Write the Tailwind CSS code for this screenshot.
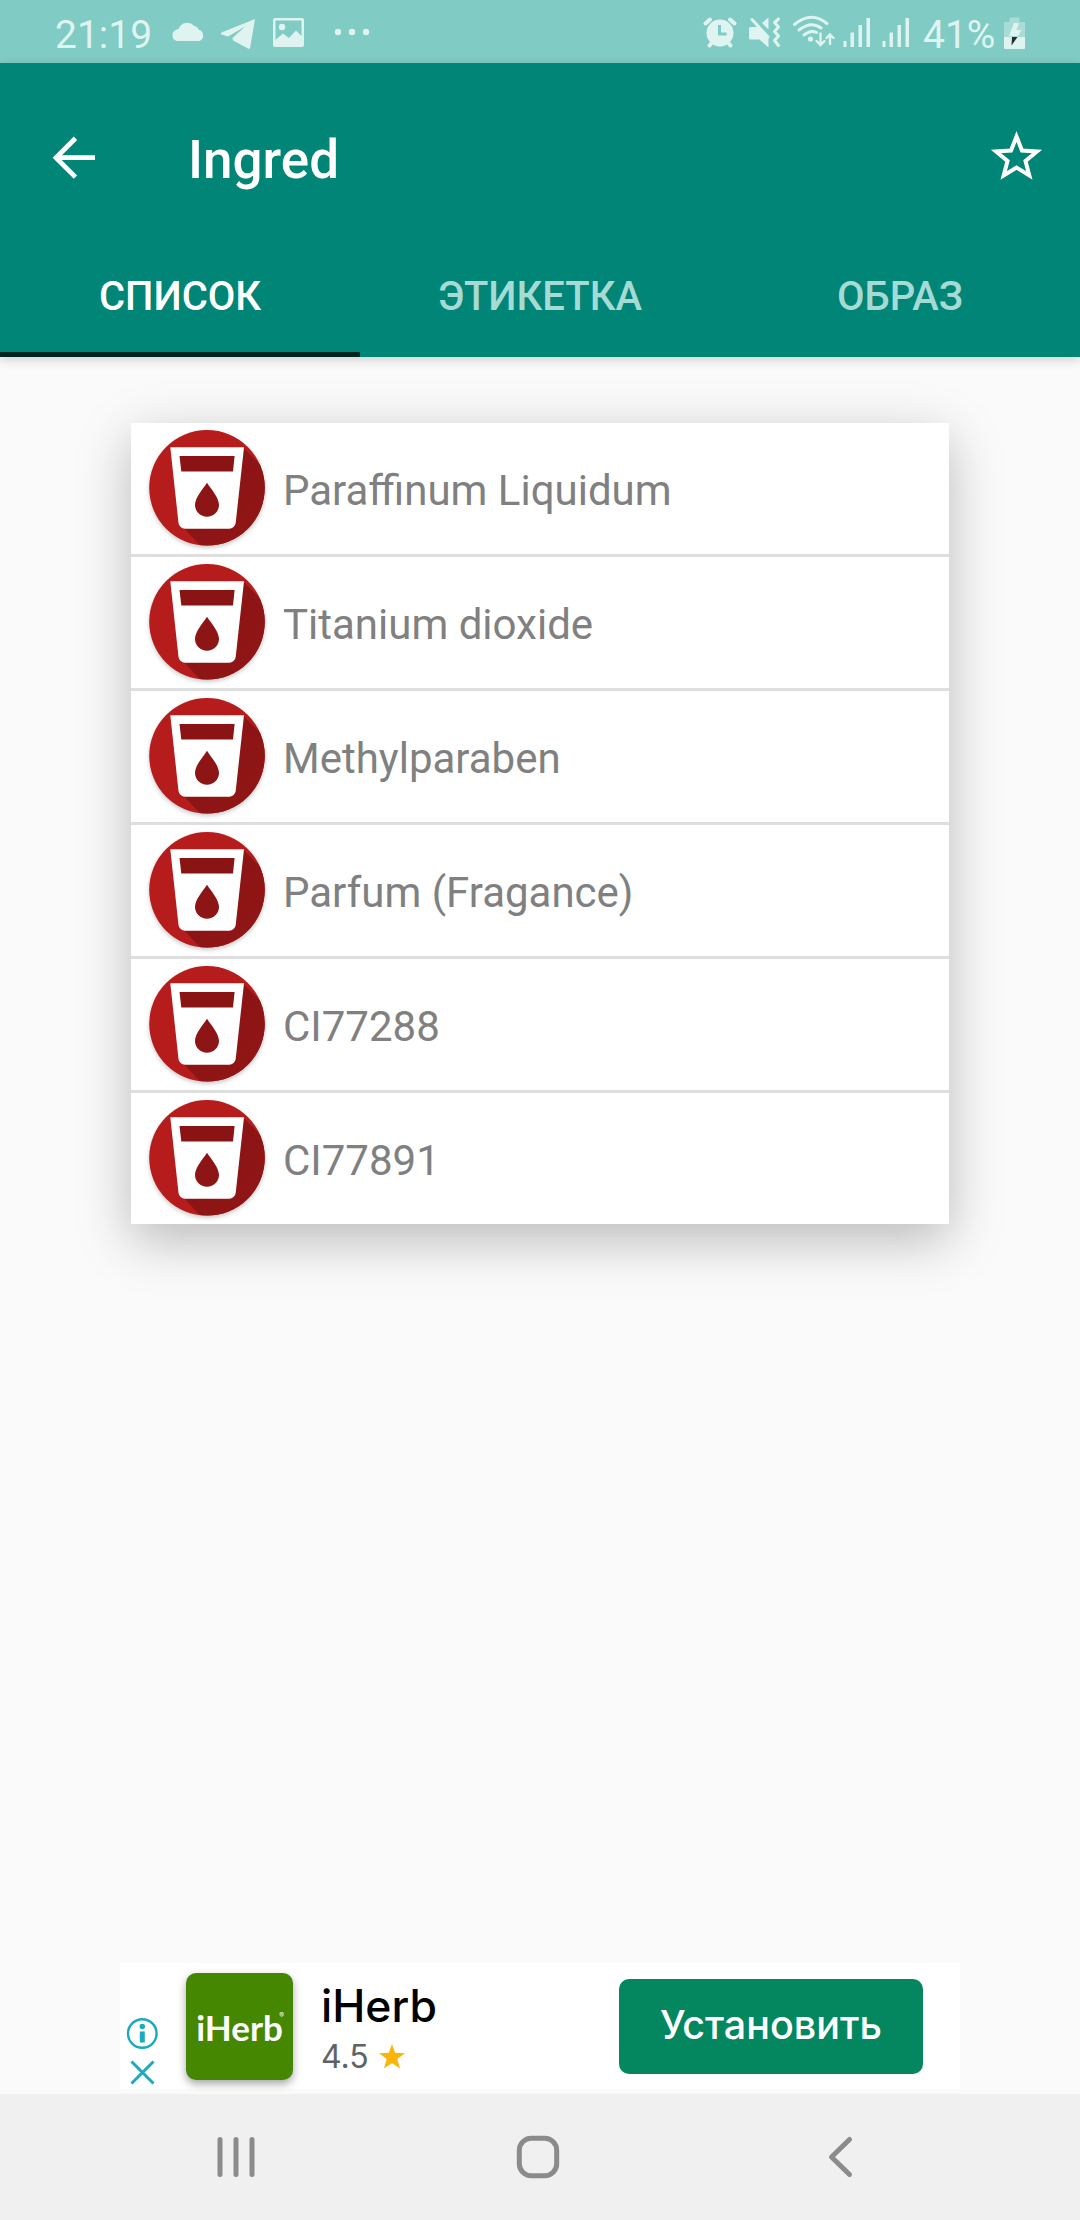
<!DOCTYPE html>
<html lang="ru">
<head>
<meta charset="utf-8">
<title>Ingred</title>
<script src="https://cdn.jsdelivr.net/npm/@tailwindcss/browser@4"></script>
</head>
<body class="w-[1080px] h-[2220px] bg-[#fafafa] font-['Roboto',sans-serif] flex flex-col overflow-hidden">

<!-- Status bar -->
<div class="h-[63px] shrink-0 bg-[#80cbc4] text-[#dff4f1] flex items-center">
  <span class="ml-[55px] pt-[7px] w-[113px] text-[39px] leading-none whitespace-nowrap">21:19</span>
  <svg class="w-[204px] h-[63px]" viewBox="168 0 204 63" fill="#dff4f1">
    <path d="M177 41a6 6 0 0 1-.5-11.500a6 6 0 0 1 2-.2a9 9 0 0 1 15.500-3.500a7 7 0 0 1 5 4a6 6 0 0 1 .5 11.200z"/>
    <path d="M255 19L221.500 32.500c-1 .5-1 1.500 0 2l6.500 2L245 26.500L232.500 38L233 40.500L248 48.500c1.500.8 2 0 2.200-1z"/>
    <path fill-rule="evenodd" d="M275 18h27a2 2 0 0 1 2 2v25a2 2 0 0 1-2 2h-27a2 2 0 0 1-2-2V20a2 2 0 0 1 2-2zM275.500 20.500V40L283 33.500L289 38L296 30.500L301.500 36V20.500z"/>
    <circle cx="282" cy="27" r="3.200"/>
    <circle cx="338" cy="32" r="3.200"/><circle cx="352" cy="32" r="3.200"/><circle cx="366" cy="32" r="3.200"/>
  </svg>
  <svg class="ml-auto w-[220px] h-[63px]" viewBox="700 0 220 63" fill="#dff4f1">
    <circle cx="720" cy="33" r="13.500"/>
    <g fill="none" stroke="#dff4f1" stroke-width="4" stroke-linecap="round"><path d="M705.500 23.500L710 19.500M734.500 23.500L730 19.500M709.500 45.500L712 42.500M730.500 45.500L728 42.500"/></g>
    <path d="M719.500 25v9h7" fill="none" stroke="#80cbc4" stroke-width="3"/>
    <path d="M750.500 27h8L768.500 36V47.500L759.500 39.500H750.500a1.500 1.500 0 0 1-1.500-1.500V28.500a1.500 1.500 0 0 1 1.500-1.500zM762 23L768.500 17.500V29.500z"/>
    <path d="M752 19.500L768 37" stroke="#dff4f1" stroke-width="3" stroke-linecap="round"/>
    <path d="M778.500 19L774.500 22.500L778.500 27L774.500 31.500L778.500 36L774.500 40.500L778.500 45.500" fill="none" stroke="#dff4f1" stroke-width="3" stroke-linecap="round" stroke-linejoin="round"/>
    <g fill="none" stroke="#dff4f1" stroke-width="3" stroke-linecap="round">
      <path d="M794.500 24.500Q811 10.500 827 23.500M799 30Q811 20.500 821 28M804 35Q811 29.500 816.500 32.500"/>
      <path d="M820.500 33.500V44.500M816.500 41L820.500 45L824.500 41M830 44V34.500M826.500 38L830 34.500L833.500 38" stroke-width="2.400"/>
    </g>
    <circle cx="810.500" cy="39" r="2.600"/>
    <path d="M843.500 41h3v6h-3zM850.500 32.500h3.500V47h-3.500zM858.500 25h3.500V47h-3.500zM866.500 18h3.500V47h-3.500zM882.500 41h3v6h-3zM889.500 32.500h3.500V47h-3.500zM897.500 25h3.500V47h-3.500zM905.500 18h3.500V47h-3.500z"/>
  </svg>
  <span class="ml-[3px] pt-[7px] w-[77px] text-[39px] leading-none whitespace-nowrap">41%</span>
  <svg class="w-[80px] h-[63px]" viewBox="1000 0 80 63">
    <path d="M1009.500 17.500h10v4.500h5.500V37h-21V22h5.500z" fill="#a9dcd7"/>
    <path d="M1004 37h21v11a1 1 0 0 1-1 1h-19a1 1 0 0 1-1-1z" fill="#dff4f1"/>
    <path d="M1014 23h5l-2.500 7h5l-3.500 6h-9z" fill="#dff4f1"/>
    <path d="M1012 37h5.500L1011.500 45.500z" fill="#26302f"/>
  </svg>
</div>

<!-- App bar with tabs -->
<div class="relative z-10 h-[294px] shrink-0 bg-[#008577] flex flex-col shadow-[0_3px_10px_rgba(0,0,0,0.16)]">
  <div class="h-[190px] flex items-center text-white">
    <svg class="ml-[50px] w-[50px] h-[50px]" viewBox="50 133 50 50" fill="none" stroke="#fff" stroke-width="4.800"><path d="M95 157.700H56.500M75.500 138.300L56 157.700L75.500 177.100"/></svg>
    <span class="ml-[88px] pt-[4px] text-[53px] leading-none font-medium">Ingred</span>
    <svg class="ml-auto mr-[36px] w-[56px] h-[56px]" viewBox="988 130 56 56" fill="none" stroke="#fff" stroke-width="4"><path d="M1016.500 136.500L1022 150.500L1037 151.500L1025.500 161L1029.300 175.500L1016.500 167.500L1003.700 175.500L1007.500 161L996 151.500L1011 150.500z"/></svg>
  </div>
  <div class="flex-1 grid grid-cols-3 text-[40px] leading-none font-medium text-[#a6dad5]">
    <div class="border-b-5 border-[#002622] flex justify-center pt-[24px] text-white"><span>СПИСОК</span></div>
    <div class="flex justify-center pt-[24px]"><span>ЭТИКЕТКА</span></div>
    <div class="flex justify-center pt-[24px]"><span>ОБРАЗ</span></div>
  </div>
</div>

<svg class="absolute w-0 h-0">
  <defs>
    <linearGradient id="dark" x1="0" y1="0" x2="1" y2="1"><stop offset="0" stop-color="#881313"/><stop offset="1" stop-color="#9a1819"/></linearGradient>
    <clipPath id="disc"><circle cx="58" cy="57.800" r="57.800"/></clipPath>
    <symbol id="cup" viewBox="-4 -4 124 128">
      <circle cx="58" cy="57.800" r="57.800" fill="#b71c1c"/>
      <path clip-path="url(#disc)" d="M94 17.500L170 93L130 200L32 95z" fill="url(#dark)"/>
      <path d="M21.300 17.300H95L86.700 93a6.500 6.500 0 0 1-6.500 5.700H36a6.500 6.500 0 0 1-6.500-5.700z" fill="#fff"/>
      <path d="M30.500 26H85.600L84 41.500H32.300z" fill="#8a1414"/>
      <path d="M58 52.700C62 59 70 67.500 70 75a12 11.700 0 0 1-24 0C46 67.500 54 59 58 52.700z" fill="#8e1515"/>
    </symbol>
  </defs>
</svg>

<!-- Ingredient list -->
<div class="mt-[66px] mx-[131px] h-[801px] shrink-0 bg-white divide-y-3 divide-[#dedede] text-[42px] leading-none text-[#808080] shadow-[0_16px_50px_rgba(0,0,0,0.26)]">
  <div class="h-[134px] flex items-center"><svg class="ml-[14px] mt-[3px] w-[124px] h-[128px] drop-shadow-[0_2px_2px_rgba(0,0,0,0.22)]"><use href="#cup"/></svg><span class="ml-[14px] pt-[5px]">Paraffinum Liquidum</span></div>
  <div class="h-[134px] flex items-center"><svg class="ml-[14px] mt-[3px] w-[124px] h-[128px] drop-shadow-[0_2px_2px_rgba(0,0,0,0.22)]"><use href="#cup"/></svg><span class="ml-[14px] pt-[5px]">Titanium dioxide</span></div>
  <div class="h-[134px] flex items-center"><svg class="ml-[14px] mt-[3px] w-[124px] h-[128px] drop-shadow-[0_2px_2px_rgba(0,0,0,0.22)]"><use href="#cup"/></svg><span class="ml-[14px] pt-[5px]">Methylparaben</span></div>
  <div class="h-[134px] flex items-center"><svg class="ml-[14px] mt-[3px] w-[124px] h-[128px] drop-shadow-[0_2px_2px_rgba(0,0,0,0.22)]"><use href="#cup"/></svg><span class="ml-[14px] pt-[5px]">Parfum (Fragance)</span></div>
  <div class="h-[134px] flex items-center"><svg class="ml-[14px] mt-[3px] w-[124px] h-[128px] drop-shadow-[0_2px_2px_rgba(0,0,0,0.22)]"><use href="#cup"/></svg><span class="ml-[14px] pt-[5px]">CI77288</span></div>
  <div class="h-[131px] flex items-center"><svg class="ml-[14px] mt-[3px] w-[124px] h-[128px] drop-shadow-[0_2px_2px_rgba(0,0,0,0.22)]"><use href="#cup"/></svg><span class="ml-[14px] pt-[5px]">CI77891</span></div>
</div>

<!-- Ad banner -->
<div class="mt-auto mb-[5px] mx-[120px] h-[126px] shrink-0 bg-white flex font-['Inter',sans-serif]">
  <svg class="w-[40px] h-[126px]" viewBox="120 1963 40 126" fill="none" stroke="#1ba9c0">
    <circle cx="142.300" cy="2033.500" r="14.300" stroke-width="2.400"/>
    <circle cx="142.300" cy="2026.500" r="2.700" fill="#1ba9c0" stroke="none"/>
    <path d="M142.300 2031.500v11" stroke-width="5"/>
    <path d="M131.500 2061.500l22 22M153.500 2061.500l-22 22" stroke-width="3"/>
  </svg>
  <div class="relative ml-[26px] mt-[10px] w-[107px] h-[107px] rounded-[10px] bg-[#458700] shadow-[0_4px_8px_rgba(0,0,0,0.35)] flex items-center justify-center text-white">
    <span class="pt-[1px] text-[35px] leading-none font-bold font-['Lato',sans-serif]">iHerb</span>
    <span class="absolute right-[9px] top-[39px] text-[7px] leading-none">®</span>
  </div>
  <div class="ml-[28px] flex flex-col">
    <span class="mt-[21px] text-[44.500px] leading-none font-medium text-black">iHerb</span>
    <div class="mt-[12px] flex items-center text-[32px] leading-none text-[#5f6368]"><span>4.5</span>
      <svg class="ml-[10px] w-[26px] h-[25px]" viewBox="0 0 26 25"><path fill="#f9b50b" d="M13 0l3.200 8.700L26 9.200L18.300 15.100L21 24.500L13 19.300L5 24.500L7.700 15.100L0 9.200L9.800 8.700z"/></svg>
    </div>
  </div>
  <div class="ml-auto mr-[37px] mt-[16px] w-[304px] h-[95px] rounded-[10px] bg-[#04875f] text-white flex items-center justify-center"><span class="pb-[2px] text-[39.500px] leading-none font-medium">Установить</span></div>
</div>

<!-- Navigation bar -->
<div class="h-[126px] shrink-0 bg-[#f0f0f0]">
  <svg class="w-[1080px] h-[126px]" viewBox="0 2094 1080 126" fill="none" stroke="#8b8b8b" stroke-width="5" stroke-linecap="round" stroke-linejoin="round">
    <path d="M220 2139.500v35M236 2139.500v35M252 2139.500v35"/>
    <rect x="519.300" y="2138.300" width="37.400" height="37.400" rx="12"/>
    <path d="M849.500 2139.500L831.500 2157L849.500 2174.500"/>
  </svg>
</div>
</body>
</html>
